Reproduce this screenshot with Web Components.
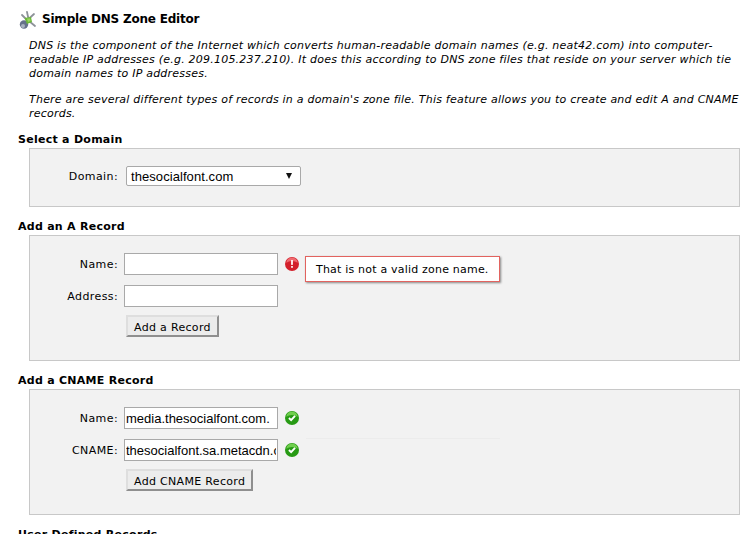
<!DOCTYPE html>
<html lang="en">
<head>
<meta charset="utf-8">
<title>Simple DNS Zone Editor</title>
<style>
html, body { margin: 0; height: 534px; overflow: hidden; background: #fff; }
body { font: 11px "DejaVu Sans", Verdana, sans-serif; color: #000; }
zone-editor { padding: 0 16px 0 18px; }
</style>
</head>
<body>
<zone-editor>
  <span slot="title">Simple DNS Zone Editor</span>
  <p>DNS is the component of the Internet which converts human-readable domain names (e.g. neat42.com) into computer-readable IP addresses (e.g. 209.105.237.210). It does this according to DNS zone files that reside on your server which tie domain names to IP addresses.</p>
  <p>There are several different types of records in a domain's zone file. This feature allows you to create and edit A and CNAME records.</p>

  <zone-section slot="sections" heading="Select a Domain" height="59">
    <zone-row label="Domain:"><zone-select value="thesocialfont.com"></zone-select></zone-row>
  </zone-section>

  <zone-section slot="sections" heading="Add an A Record" height="126">
    <zone-row label="Name:"><zone-input></zone-input><zone-status kind="bad" message="That is not a valid zone name."></zone-status></zone-row>
    <zone-row label="Address:"><zone-input></zone-input></zone-row>
    <zone-row><zone-button>Add a Record</zone-button></zone-row>
  </zone-section>

  <zone-section slot="sections" heading="Add a CNAME Record" height="126">
    <zone-row label="Name:"><zone-input value="media.thesocialfont.com."></zone-input><zone-status kind="ok"></zone-status></zone-row>
    <zone-row label="CNAME:"><zone-input value="thesocialfont.sa.metacdn.com."></zone-input><zone-status kind="ok"></zone-status></zone-row>
    <zone-row><zone-button>Add CNAME Record</zone-button></zone-row>
    <i class="hairline"></i>
  </zone-section>

  <zone-section slot="sections" heading="User Defined Records" height="60"></zone-section>
</zone-editor>

<script>
class ZoneEditor extends HTMLElement {
    constructor() {
        super();
        const shadowRoot = this.attachShadow({ mode: 'open' });
        shadowRoot.innerHTML = `
			<style>
				:host { display: block; }
				h1 {
					display: flex;
					align-items: center;
					gap: 4px;
					margin: 0;
					padding-top: 9px;
					height: 20px;
					font-size: 12px;
					font-weight: bold;
					letter-spacing: -.2px;
				}
				svg { width: 20px; height: 20px; flex: none; margin-top: 2px; }
				.intro { padding: 10px 0 0 11px; margin-right: -6px; font-style: italic; line-height: 14px; height: 103px; box-sizing: border-box; font-size: 11px; letter-spacing: .22px; }
				::slotted(p) { margin: 0 0 12px; }
			</style>
			<h1>
				<svg viewBox="0 0 20 20">
					<path d="M9 2 L10.500 9 M4 5 L9 10 M16 4 L10 9.500 M11 11 L17 16" stroke="#8d9299" stroke-width="1.800" stroke-linecap="round" fill="none"/>
					<circle cx="6" cy="14.500" r="4.200" fill="#66728a"/>
					<circle cx="5" cy="16" r="2" fill="#a9b2c0"/>
					<path d="M6.500 8 L13 7 L14 12 L9 14 Z" fill="#6cb83a"/>
					<path d="M9 8.500 L12 8.500 L12.500 11 L10 12 Z" fill="#9ad85f"/>
				</svg>
				<slot name="title"></slot>
			</h1>
			<div class="intro"><slot></slot></div>
			<slot name="sections"></slot>
		`;
    }
}

class ZoneSection extends HTMLElement {
    constructor() {
        super();
        const shadowRoot = this.attachShadow({ mode: 'open' });
        shadowRoot.innerHTML = `
			<style>
				:host { display: block; margin-bottom: 12px; }
				h2 { margin: 0; height: 16px; line-height: 15px; font-size: 11px; font-weight: bold; letter-spacing: .27px; }
				.panel {
					position: relative;
					margin-left: 11px;
					box-sizing: border-box;
					border: 1px solid #c8c8c8;
					background: #f2f2f2;
					padding-top: 17px;
					display: flex;
					flex-direction: column;
					gap: 10px;
				}
				::slotted(.hairline) {
					position: absolute;
					left: 276px;
					top: 48px;
					width: 194px;
					height: 1px;
					background: #ececec;
				}
			</style>
			<h2></h2>
			<div class="panel"><slot></slot></div>
		`;
    }
    connectedCallback() {
        this.shadowRoot.querySelector('h2').textContent = this.getAttribute('heading');
        this.shadowRoot.querySelector('.panel').style.height = this.getAttribute('height') + 'px';
    }
}

class ZoneRow extends HTMLElement {
    constructor() {
        super();
        const shadowRoot = this.attachShadow({ mode: 'open' });
        shadowRoot.innerHTML = `
			<style>
				:host { display: flex; align-items: center; }
				label { width: 88px; text-align: right; margin-right: 6px; flex: none; letter-spacing: .4px; }
			</style>
			<label></label>
			<slot></slot>
		`;
    }
    connectedCallback() {
        this.shadowRoot.querySelector('label').textContent = this.getAttribute('label') || '';
    }
}

class ZoneInput extends HTMLElement {
    constructor() {
        super();
        const shadowRoot = this.attachShadow({ mode: 'open' });
        shadowRoot.innerHTML = `
			<style>
				:host { display: block; }
				input {
					display: block;
					box-sizing: border-box;
					width: 154px;
					height: 22px;
					margin: 0;
					padding: 0 1px;
					border: 1px solid #a9a9a9;
					border-radius: 0;
					background: #fff;
					color: #000;
					font: 13px "Liberation Sans", Arial, sans-serif;
					outline: none;
				}
			</style>
			<input type="text">
		`;
    }
    connectedCallback() {
        this.shadowRoot.querySelector('input').value = this.getAttribute('value') || '';
    }
}

class ZoneSelect extends HTMLElement {
    constructor() {
        super();
        const shadowRoot = this.attachShadow({ mode: 'open' });
        shadowRoot.innerHTML = `
			<style>
				:host {
					display: flex;
					align-items: center;
					justify-content: space-between;
					box-sizing: border-box;
					width: 175px;
					height: 20px;
					margin-left: 2px;
					padding: 0 8px 0 4px;
					border: 1px solid #a9a9a9;
					border-radius: 2px;
					background: #fff;
					font: 13px "Liberation Sans", Arial, sans-serif;
					letter-spacing: .07px;
				}
				i { width: 0; height: 0; border: 3.500px solid transparent; border-top: 6px solid #111; border-bottom: 0; }
			</style>
			<span></span><i></i>
		`;
    }
    connectedCallback() {
        this.shadowRoot.querySelector('span').textContent = this.getAttribute('value');
    }
}

class ZoneButton extends HTMLElement {
    constructor() {
        super();
        const shadowRoot = this.attachShadow({ mode: 'open' });
        shadowRoot.innerHTML = `
			<style>
				:host { display: block; margin: -2px 0 0 2px; }
				button {
					display: block;
					height: 22px;
					margin: 0;
					padding: 2px 6px 0;
					border: 2px solid;
					border-color: #dedede #8f8f8f #8f8f8f #dedede;
					background: #ececec;
					color: #000;
					font: 11px "DejaVu Sans", Verdana, sans-serif;
					letter-spacing: .32px;
				}
			</style>
			<button type="button"><slot></slot></button>
		`;
    }
}

class ZoneStatus extends HTMLElement {
    constructor() {
        super();
        const ok = this.getAttribute('kind') === 'ok';
        const mark = ok
            ? `<path d="M4.500 8 L7 10.500 L11.500 5.500" fill="none" stroke="#fff" stroke-width="2.200"/>`
            : `<rect x="7" y="3.500" width="2" height="5.500" fill="#fff"/><rect x="7" y="10.300" width="2" height="2" fill="#fff"/>`;
        const shadowRoot = this.attachShadow({ mode: 'open' });
        shadowRoot.innerHTML = `
			<style>
				:host { display: block; position: relative; margin-left: 7px; width: 14px; height: 14px; }
				svg { display: block; width: 14px; height: 14px; }
				.tip {
					position: absolute;
					left: 20px;
					top: -1px;
					box-sizing: border-box;
					height: 26px;
					width: 195px;
					border: 1px solid #e2635f;
					background: #fff;
					box-shadow: 1px 1px 2px #888;
					line-height: 26px;
					padding-left: 10px;
					letter-spacing: .2px;
					white-space: nowrap;
				}
			</style>
			<svg viewBox="0 0 16 16">
				<circle cx="8" cy="8" r="8" fill="${ok ? '#279a14' : '#d3202b'}"/>
				<path d="M1.500 6.500 A6.500 6 0 0 1 14.500 6.500 A10 8 0 0 0 1.500 6.500 Z" fill="${ok ? '#6fce4d' : '#ef6a70'}"/>
				${mark}
			</svg>
		`;
        const message = this.getAttribute('message');
        if (message) {
            let tip = document.createElement('div');
            tip.className = 'tip';
            tip.textContent = message;
            shadowRoot.appendChild(tip);
        }
    }
}

window.customElements.define('zone-editor', ZoneEditor);
window.customElements.define('zone-section', ZoneSection);
window.customElements.define('zone-row', ZoneRow);
window.customElements.define('zone-input', ZoneInput);
window.customElements.define('zone-select', ZoneSelect);
window.customElements.define('zone-button', ZoneButton);
window.customElements.define('zone-status', ZoneStatus);
</script>
</body>
</html>
